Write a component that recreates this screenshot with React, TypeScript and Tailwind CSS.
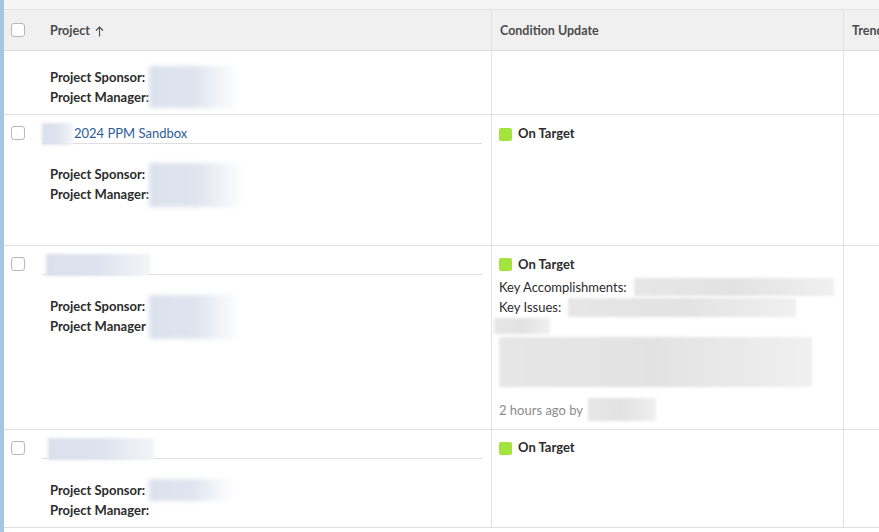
import React from "react";

const font = { fontFamily: "Lato, 'Open Sans', sans-serif" };

function Blur({ w, h, tone = "blue", className = "" }: { w: number; h: number; tone?: "blue" | "gray"; className?: string }) {
  const bg = tone === "blue" ? "bg-gradient-to-r from-[#dbe1ec] via-[#dde3ee] to-[#f3f5f9]" : "bg-gradient-to-r from-[#e6e6e6] via-[#e2e2e2] to-[#f0f0f0]";
  return <span className={`inline-block align-middle blur-[1.5px] shrink-0 ${bg} ${className}`} style={{ width: w, height: h }} />;
}

function Checkbox() {
  return <div className="w-[14px] h-[14px] rounded-[3px] border border-[#b8b8b8] bg-white shrink-0" />;
}

function People({ sponsorW, managerW, colonS = true, colonM = true, blurTop = 0 }: { sponsorW: number; managerW: number; colonS?: boolean; colonM?: boolean; blurTop?: number }) {
  return (
    <div className="relative pl-[8px] text-[13px] leading-[20px] font-bold text-[#2c2c2c]">
      <div>Project Sponsor{colonS ? ":" : ""}</div>
      <div>Project Manager{colonM ? ":" : ""}</div>
      {sponsorW > 0 && (
        <div className="absolute left-[107px] blur-[2px] bg-gradient-to-r from-[#dce2ed] via-[#dfe4ee] to-[#ffffff]" style={{ top: blurTop, width: sponsorW, height: managerW }} />
      )}
    </div>
  );
}

function Status() {
  return (
    <div className="flex items-center gap-[6px] h-[20px]">
      <div className="w-[13px] h-[13px] rounded-[2px] bg-[#a4e23d]" />
      <span className="text-[13px] font-bold text-[#2c2c2c]">On Target</span>
    </div>
  );
}

export default function App() {
  return (
    <div className="w-[879px] h-[532px] overflow-hidden bg-white flex" style={font}>
      <div className="w-[4px] shrink-0 bg-[#a7c4e0]" />
      <div className="flex-1 flex flex-col min-w-0">
        <div className="h-[10px] bg-[#f5f5f5] border-b border-[#e1e1e1] shrink-0" />
        {/* header */}
        <div className="flex h-[41px] bg-[#f0f0f0] border-b border-[#dcdcdc] shrink-0 text-[12.5px] font-bold text-[#4b4b4b]">
          <div className="w-[488px] shrink-0 border-r border-[#e2e2e2] flex items-center pl-[7px]">
            <Checkbox />
            <span className="ml-[25px] mt-[3px]">Project</span>
            <svg className="ml-[5px] mt-[2px]" width="9" height="11" viewBox="0 0 9 11" fill="none" stroke="#4b4b4b" strokeWidth="1.1">
              <path d="M4.5 10.5V1M1 4.5L4.5 1L8 4.5" />
            </svg>
          </div>
          <div className="w-[352px] shrink-0 border-r border-[#e2e2e2] flex items-center pl-[8px] pt-[3px]">Condition Update</div>
          <div className="flex-1 min-w-0 overflow-hidden flex items-center pl-[8px] pt-[3px] whitespace-nowrap">Trend</div>
        </div>

        {/* row 1 */}
        <div className="flex h-[64px] border-b border-[#e0e0e0] shrink-0">
          <div className="w-[488px] shrink-0 border-r border-[#e2e2e2] pt-[16px] pl-[38px]">
            <People sponsorW={90} managerW={42} blurTop={-1} />
          </div>
          <div className="w-[352px] shrink-0 border-r border-[#e2e2e2]" />
          <div className="flex-1" />
        </div>

        {/* row 2 */}
        <div className="flex h-[131px] border-b border-[#e0e0e0] shrink-0">
          <div className="w-[488px] shrink-0 border-r border-[#e2e2e2] flex pl-[7px] pt-[11px]">
            <Checkbox />
            <div className="ml-[17px] w-[440px]">
              <div className="flex items-center h-[17px] border-b border-[#dedede] pb-[1px] box-content -mt-[1px]">
                <Blur w={31} h={22} />
                <span className="text-[13px] text-[#2b5c99] ml-[1px]">2024 PPM Sandbox</span>
              </div>
              <div className="pt-[20px]">
                <People sponsorW={95} managerW={44} blurTop={-1} />
              </div>
            </div>
          </div>
          <div className="w-[352px] shrink-0 border-r border-[#e2e2e2] pl-[7px] pt-[9px]">
            <Status />
          </div>
          <div className="flex-1" />
        </div>

        {/* row 3 */}
        <div className="flex h-[184px] border-b border-[#e0e0e0] shrink-0">
          <div className="w-[488px] shrink-0 border-r border-[#e2e2e2] flex pl-[7px] pt-[11px]">
            <Checkbox />
            <div className="ml-[17px] w-[440px]">
              <div className="flex items-center h-[17px] border-b border-[#dedede] pb-[1px] box-content -mt-[1px]">
                <Blur w={104} h={22} className="ml-[4px] mt-[1px]" />
              </div>
              <div className="pt-[21px]">
                <People sponsorW={92} managerW={44} colonM={false} blurTop={-1} />
              </div>
            </div>
          </div>
          <div className="w-[352px] shrink-0 border-r border-[#e2e2e2] pl-[7px] pt-[8px] text-[13px] leading-[20px] text-[#2c2c2c]">
            <Status />
            <div className="mt-[3px] flex items-center">
              <span>Key Accomplishments:</span>
              <Blur w={200} h={18} tone="gray" className="ml-[7px]" />
            </div>
            <div className="flex items-center">
              <span>Key Issues:</span>
              <Blur w={228} h={19} tone="gray" className="ml-[7px]" />
            </div>
            <div className="h-[18px] flex items-center -ml-[5px]">
              <Blur w={56} h={16} tone="gray" />
            </div>
            <div className="mt-[2px] h-[50px] flex items-center">
              <Blur w={313} h={50} tone="gray" />
            </div>
            <div className="mt-[11px] text-[#8a8a8a] flex items-center">
              <span>2 hours ago by</span>
              <Blur w={68} h={23} tone="gray" className="ml-[5px]" />
            </div>
          </div>
          <div className="flex-1" />
        </div>

        {/* row 4 */}
        <div className="flex h-[98px] border-b border-[#e0e0e0] shrink-0">
          <div className="w-[488px] shrink-0 border-r border-[#e2e2e2] flex pl-[7px] pt-[11px]">
            <Checkbox />
            <div className="ml-[17px] w-[440px]">
              <div className="flex items-center h-[17px] border-b border-[#dedede] pb-[1px] box-content -mt-[1px]">
                <Blur w={106} h={22} className="ml-[6px]" />
              </div>
              <div className="pt-[21px]">
                <People sponsorW={85} managerW={22} blurTop={-1} />
              </div>
            </div>
          </div>
          <div className="w-[352px] shrink-0 border-r border-[#e2e2e2] pl-[7px] pt-[8px]">
            <Status />
          </div>
          <div className="flex-1" />
        </div>
      </div>
    </div>
  );
}
